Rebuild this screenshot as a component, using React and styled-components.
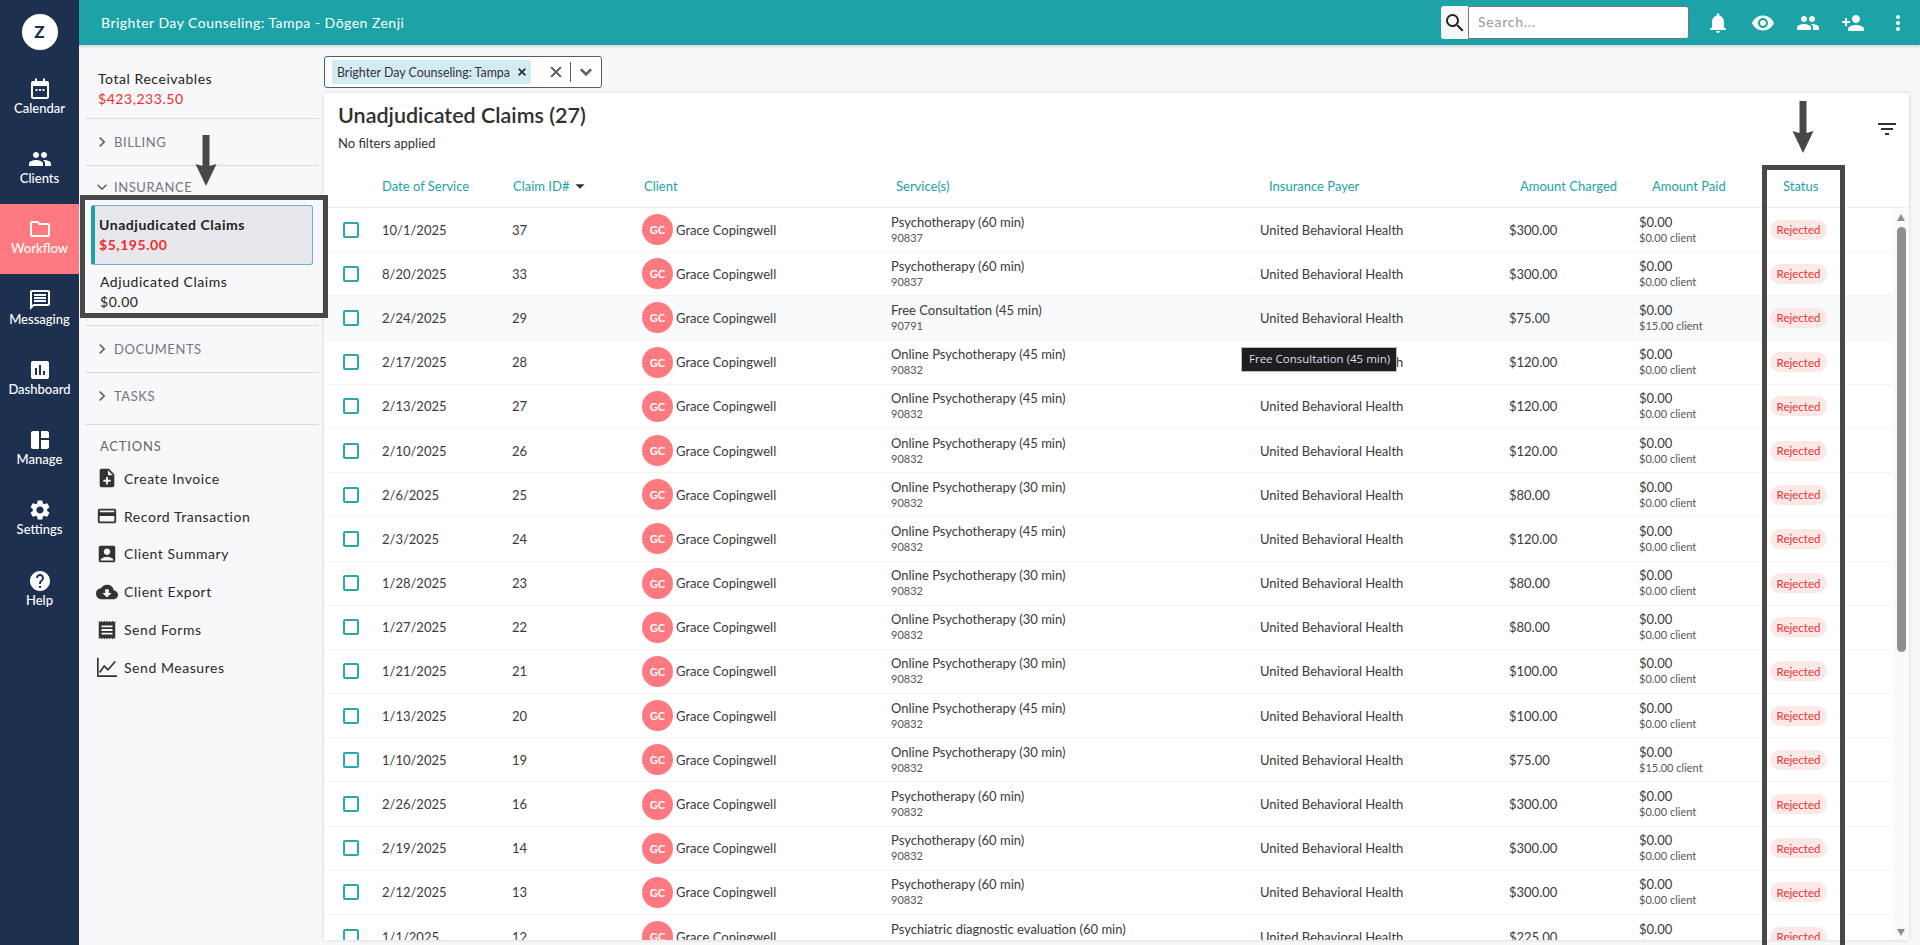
import React from "react";
import styled, { createGlobalStyle } from "styled-components";
import {
  MdPeople,
  MdOutlineFolder,
  MdOutlineMessage,
  MdAssessment,
  MdSpaceDashboard,
  MdSettings,
  MdHelp,
  MdNoteAdd,
  MdOutlineCreditCard,
  MdAccountBox,
  MdCloudDownload,
  MdReceipt,
  MdNotifications,
  MdVisibility,
  MdPersonAdd,
  MdMoreVert,
  MdFilterList,
  MdSearch,
  MdChevronRight,
  MdExpandMore,
  MdClose,
  MdArrowDropDown,
} from "react-icons/md";

const FONT = `Lato, "Noto Sans", Arial, sans-serif`;
const TEAL = "#1ca3a8";
const NAVY = "#1d3050";

const GlobalStyle = createGlobalStyle`
  html, body {
    margin: 0;
    padding: 0;
    height: 945px;
    overflow: hidden;
    background: #f8f8fa;
    font-family: ${FONT};
  }
  * { box-sizing: border-box; }
`;

const Page = styled.div`
  position: relative;
  display: flex;
  width: 1920px;
  height: 945px;
  overflow: hidden;
`;

/* left icon rail */
const Rail = styled.nav`
  width: 79px;
  flex: none;
  background: ${NAVY};
  display: flex;
  flex-direction: column;
`;

const LogoBox = styled.div`
  height: 63px;
  display: flex;
  align-items: center;
  justify-content: center;
`;

const Logo = styled.div`
  width: 36px;
  height: 36px;
  border-radius: 50%;
  background: #fff;
  color: ${NAVY};
  font-weight: 900;
  font-size: 17px;
  display: flex;
  align-items: center;
  justify-content: center;
`;

const RailItem = styled.div`
  height: 70.3px;
  display: flex;
  flex-direction: column;
  align-items: center;
  justify-content: center;
  padding-bottom: 4px;
  color: #fff;
  font-size: 13px;
  font-weight: 500;
  line-height: 15px;
  background: ${(p) => (p.$active ? "#ff7a80" : "transparent")};
  svg { display: block; }
`;

/* right of the rail */
const Main = styled.div`
  flex: 1;
  min-width: 0;
  display: flex;
  flex-direction: column;
`;

const TopBar = styled.header`
  height: 45px;
  flex: none;
  background: ${TEAL};
  box-shadow: 0 1px 4px rgba(0, 0, 0, 0.2);
  display: flex;
  align-items: center;
  padding: 0 0 0 22px;
  color: #fff;
  position: relative;
`;

const TopTitle = styled.div`
  flex: 1;
  font-size: 14px;
  letter-spacing: 0.48px;
`;

const SearchBtn = styled.div`
  width: 27px;
  height: 33px;
  background: #f8f8fa;
  border-radius: 3px 0 0 3px;
  color: #222;
  display: flex;
  align-items: center;
  justify-content: center;
`;

const SearchInput = styled.div`
  width: 221px;
  height: 33px;
  background: #fff;
  border: 1px solid #777;
  border-radius: 0 3px 3px 0;
  color: #9a9a9a;
  font-size: 14px;
  letter-spacing: 0.75px;
  padding-left: 9px;
  line-height: 30px;
`;

const TopIcons = styled.div`
  display: flex;
  align-items: center;
  margin-left: 6px;
`;

const TopIcon = styled.div`
  width: 45px;
  display: flex;
  justify-content: center;
`;

const Body = styled.div`
  flex: 1;
  min-height: 0;
  display: flex;
`;

/* secondary nav */
const SideNav = styled.aside`
  width: 245px;
  flex: none;
  padding: 0 5px 0 6px;
  color: #222;
`;

const NavSection = styled.section`
  height: ${(p) => p.$h}px;
  border-bottom: ${(p) => (p.$last ? "none" : "1px solid #dcdce0")};
`;

const Receivables = styled(NavSection)`
  padding: 24px 0 0 13px;
  font-size: 14px;
  line-height: 20px;
  letter-spacing: 0.55px;
`;

const Red = styled.div`
  color: #f02c2c;
  letter-spacing: 0.55px;
`;

const NavHead = styled.div`
  height: ${(p) => p.$h || 46}px;
  padding-top: ${(p) => p.$pt || 0}px;
  display: flex;
  align-items: center;
  gap: 2px;
  padding-left: 10px;
  color: #75757f;
  font-size: 13px;
  letter-spacing: 0.55px;
  svg { color: #666; margin-left: -3px; }
`;

const ClaimItem = styled.div`
  margin: 0 6px;
  height: 60px;
  padding: ${(p) => (p.$selected ? "9px 0 0 4px" : "7px 0 0 9px")};
  font-size: 14px;
  line-height: 20px;
  letter-spacing: 0.55px;
  font-weight: ${(p) => (p.$selected ? 700 : 400)};
  color: #222;
  ${(p) =>
    p.$selected &&
    `
    background: #e8e8ec;
    border: 1.5px solid #6bb0d5;
    border-left: 4px solid ${TEAL};
    border-radius: 3px;
  `}
`;

const ActionsLabel = styled.div`
  padding: 13px 0 0 15px;
  height: 34.5px;
  color: #666;
  font-size: 13px;
  letter-spacing: 0.8px;
`;

const ActionRow = styled.div`
  height: 37.8px;
  display: flex;
  align-items: center;
  gap: 6px;
  padding-left: 11px;
  color: #2a2a2a;
  font-size: 14px;
  letter-spacing: 0.55px;
  svg { flex: none; color: #333; }
`;

/* content area */
const Content = styled.main`
  flex: 1;
  min-width: 0;
  display: flex;
  flex-direction: column;
  padding: 11px 11px 5px 0;
`;

const Select = styled.div`
  width: 278px;
  height: 32px;
  flex: none;
  border: 1px solid #555c68;
  border-radius: 3px;
  background: #fff;
  display: flex;
  align-items: center;
  padding: 0 4px 0 7px;
  margin-bottom: 5px;
`;

const Chip = styled.div`
  width: 199px;
  height: 24px;
  background: #d3ebf3;
  display: flex;
  align-items: center;
  justify-content: space-between;
  padding: 0 3px 0 5px;
  font-size: 12.4px;
  color: #333;
  path:not([fill="none"]) { stroke: currentColor; stroke-width: 2; }
`;

const SelectTail = styled.div`
  flex: 1;
  display: flex;
  align-items: center;
  justify-content: flex-end;
  color: #5a6270;
  path:not([fill="none"]) { stroke: currentColor; stroke-width: 1; }
`;

const Sep = styled.span`
  width: 1px;
  height: 20px;
  background: #555c68;
  margin: 0 4px 0 5px;
`;

const Panel = styled.section`
  flex: 1;
  min-height: 0;
  background: #fff;
  box-shadow: 0 0 4px rgba(0, 0, 0, 0.16);
  display: flex;
  flex-direction: column;
`;

const PanelHead = styled.div`
  height: 72px;
  flex: none;
  padding: 8px 10px 0 14px;
  display: flex;
  justify-content: space-between;
  align-items: flex-start;
`;

const Title = styled.h1`
  margin: 0;
  font-size: 21.5px;
  line-height: 28px;
  font-weight: 600;
  color: #2f2f2f;
`;

const SubTitle = styled.div`
  font-size: 13px;
  line-height: 16px;
  margin-top: 6px;
  color: #333;
`;

const FilterBtn = styled.div`
  color: #333;
  margin-top: 16px;
  svg { display: block; }
`;

const HeadRow = styled.div`
  height: 43px;
  flex: none;
  display: grid;
  grid-template-columns: 131px 131px 252px 373px 251px 132px 131px 1fr;
  align-items: center;
  padding-left: 58px;
  border-bottom: 1px solid #efefef;
  color: ${TEAL};
  font-size: 13px;
`;

const SortCell = styled.div`
  display: flex;
  align-items: center;
  svg { color: #333; }
`;

const TableArea = styled.div`
  flex: 1;
  min-height: 0;
  display: flex;
`;

const Rows = styled.div`
  flex: 1;
  min-width: 0;
  overflow: hidden;
`;

const Row = styled.div`
  height: 44.2px;
  display: grid;
  grid-template-columns: 39px 130px 130px 249px 369px 249px 130px 131px 1fr;
  align-items: center;
  padding-left: 19px;
  border-bottom: 1px solid #f3f3f5;
  background: ${(p) => (p.$hover ? "#f8fafb" : "#fff")};
  color: #3a3a3a;
  font-size: 13px;
`;

const Check = styled.span`
  width: 16px;
  height: 16px;
  border: 2px solid #2aa9ad;
  border-radius: 2px;
  background: #fff;
`;

const ClientCell = styled.div`
  display: flex;
  align-items: center;
  gap: 3px;
`;

const Avatar = styled.span`
  width: 31px;
  height: 31px;
  border-radius: 50%;
  background: #ff7a80;
  color: #fff;
  font-size: 11px;
  font-weight: 700;
  display: flex;
  align-items: center;
  justify-content: center;
`;

const Stack = styled.div`
  line-height: 15px;
`;

const Small = styled.div`
  font-size: 11px;
  color: #555;
`;

const Badge = styled.span`
  justify-self: start;
  height: 20px;
  width: 57px;
  border-radius: 10px;
  background: #fde8e8;
  color: #ec2f2f;
  font-size: 11.5px;
  display: flex;
  align-items: center;
  justify-content: center;
`;

const ScrollBar = styled.div`
  width: 16px;
  flex: none;
  background: #fafafa;
  display: flex;
  flex-direction: column;
  align-items: center;
  padding: 6px 0 4px;
`;

const ArrowUp = styled.span`
  border: 4.5px solid transparent;
  border-top: none;
  border-bottom: 7px solid #8e8e8e;
`;

const ArrowDown = styled.span`
  border: 4.5px solid transparent;
  border-bottom: none;
  border-top: 7px solid #8e8e8e;
`;

const Thumb = styled.div`
  width: 9px;
  height: 425px;
  margin-top: 6px;
  margin-bottom: auto;
  border-radius: 5px;
  background: #8e8e8e;
`;

/* things laid over the page: the tooltip and the drawn-on annotations */
const Tooltip = styled.div`
  position: absolute;
  left: 1241px;
  top: 347px;
  width: 156px;
  height: 25px;
  background: #1e1e1e;
  border: 1px solid #bbb;
  color: #dde;
  font-family: "Open Sans", sans-serif;
  font-size: 11.5px;
  line-height: 22px;
  padding-left: 7px;
  white-space: nowrap;
`;

const Frame = styled.div`
  position: absolute;
  left: ${(p) => p.$x}px;
  top: ${(p) => p.$y}px;
  width: ${(p) => p.$w}px;
  height: ${(p) => p.$h}px;
  border: 5px solid #484848;
  pointer-events: none;
`;

const ArrowMark = styled.svg`
  position: absolute;
  left: ${(p) => p.$x}px;
  top: ${(p) => p.$y}px;
`;

const CalendarIcon = () => (
  <svg width="24" height="24" viewBox="0 0 24 24" fill="currentColor">
    <path d="M7 1.5h2V4h6V1.5h2V4h2a2 2 0 0 1 2 2v14a2 2 0 0 1-2 2H5a2 2 0 0 1-2-2V6a2 2 0 0 1 2-2h2V1.5zM5 9v11h14V9H5z" />
    <rect x="7.5" y="12" width="2" height="2" />
    <rect x="11" y="12" width="2" height="2" />
    <rect x="14.5" y="12" width="2" height="2" />
  </svg>
);

const MeasuresIcon = () => (
  <svg width="22" height="22" viewBox="0 0 24 24" fill="none" stroke="#333" strokeWidth="1.8">
    <path d="M2 2v20h21" />
    <path d="M4 18l5-7 4 4 8-9" />
  </svg>
);

const Arrow = ({ x, y, h }) => (
  <ArrowMark $x={x} $y={y} width="22" height={h} viewBox={`0 0 22 ${h}`}>
    <path
      d={`M7.5 0h7v${h - 20}l7-2L11 ${h}L0.5 ${h - 22}l7 2z`}
      fill="#484848"
    />
  </ArrowMark>
);

const railItems = [
  ["Calendar", <CalendarIcon key="i" />],
  ["Clients", <MdPeople key="i" size={24} />],
  ["Workflow", <MdOutlineFolder key="i" size={24} />, true],
  ["Messaging", <MdOutlineMessage key="i" size={24} />],
  ["Dashboard", <MdAssessment key="i" size={24} />],
  ["Manage", <MdSpaceDashboard key="i" size={24} />],
  ["Settings", <MdSettings key="i" size={24} />],
  ["Help", <MdHelp key="i" size={24} />],
];

const actions = [
  ["Create Invoice", <MdNoteAdd key="i" size={22} />],
  ["Record Transaction", <MdOutlineCreditCard key="i" size={22} />],
  ["Client Summary", <MdAccountBox key="i" size={22} />],
  ["Client Export", <MdCloudDownload key="i" size={22} />],
  ["Send Forms", <MdReceipt key="i" size={22} />],
  ["Send Measures", <MeasuresIcon key="i" />],
];

const P60 = "Psychotherapy (60 min)";
const O45 = "Online Psychotherapy (45 min)";
const O30 = "Online Psychotherapy (30 min)";

const claims = [
  ["10/1/2025", 37, P60, "90837", "$300.00", "$0.00"],
  ["8/20/2025", 33, P60, "90837", "$300.00", "$0.00"],
  ["2/24/2025", 29, "Free Consultation (45 min)", "90791", "$75.00", "$15.00"],
  ["2/17/2025", 28, O45, "90832", "$120.00", "$0.00"],
  ["2/13/2025", 27, O45, "90832", "$120.00", "$0.00"],
  ["2/10/2025", 26, O45, "90832", "$120.00", "$0.00"],
  ["2/6/2025", 25, O30, "90832", "$80.00", "$0.00"],
  ["2/3/2025", 24, O45, "90832", "$120.00", "$0.00"],
  ["1/28/2025", 23, O30, "90832", "$80.00", "$0.00"],
  ["1/27/2025", 22, O30, "90832", "$80.00", "$0.00"],
  ["1/21/2025", 21, O30, "90832", "$100.00", "$0.00"],
  ["1/13/2025", 20, O45, "90832", "$100.00", "$0.00"],
  ["1/10/2025", 19, O30, "90832", "$75.00", "$15.00"],
  ["2/26/2025", 16, P60, "90832", "$300.00", "$0.00"],
  ["2/19/2025", 14, P60, "90832", "$300.00", "$0.00"],
  ["2/12/2025", 13, P60, "90832", "$300.00", "$0.00"],
  ["1/1/2025", 12, "Psychiatric diagnostic evaluation (60 min)", "90791", "$225.00", "$0.00"],
];

export default function App() {
  return (
    <Page>
      <GlobalStyle />
      <Rail>
        <LogoBox>
          <Logo>Z</Logo>
        </LogoBox>
        {railItems.map(([label, icon, active]) => (
          <RailItem key={label} $active={active}>
            {icon}
            {label}
          </RailItem>
        ))}
      </Rail>

      <Main>
        <TopBar>
          <TopTitle>Brighter Day Counseling: Tampa - Dōgen Zenji</TopTitle>
          <SearchBtn>
            <MdSearch size={24} />
          </SearchBtn>
          <SearchInput>Search...</SearchInput>
          <TopIcons>
            <TopIcon><MdNotifications size={24} /></TopIcon>
            <TopIcon><MdVisibility size={24} /></TopIcon>
            <TopIcon><MdPeople size={24} /></TopIcon>
            <TopIcon><MdPersonAdd size={24} /></TopIcon>
            <TopIcon><MdMoreVert size={24} /></TopIcon>
          </TopIcons>
        </TopBar>

        <Body>
          <SideNav>
            <Receivables $h={74}>
              Total Receivables
              <Red>$423,233.50</Red>
            </Receivables>
            <NavSection $h={47}>
              <NavHead><MdChevronRight size={20} />BILLING</NavHead>
            </NavSection>
            <NavSection $h={160}>
              <NavHead $h={39} $pt={3}><MdExpandMore size={20} />INSURANCE</NavHead>
              <ClaimItem $selected>
                Unadjudicated Claims
                <Red>$5,195.00</Red>
              </ClaimItem>
              <ClaimItem>
                Adjudicated Claims
                <div>$0.00</div>
              </ClaimItem>
            </NavSection>
            <NavSection $h={47}>
              <NavHead><MdChevronRight size={20} />DOCUMENTS</NavHead>
            </NavSection>
            <NavSection $h={52}>
              <NavHead><MdChevronRight size={20} />TASKS</NavHead>
            </NavSection>
            <NavSection $h={300} $last>
              <ActionsLabel>ACTIONS</ActionsLabel>
              {actions.map(([label, icon]) => (
                <ActionRow key={label}>
                  {icon}
                  {label}
                </ActionRow>
              ))}
            </NavSection>
          </SideNav>

          <Content>
            <Select>
              <Chip>
                Brighter Day Counseling: Tampa
                <MdClose size={12} />
              </Chip>
              <SelectTail>
                <MdClose size={18} />
                <Sep />
                <MdExpandMore size={22} />
              </SelectTail>
            </Select>

            <Panel>
              <PanelHead>
                <div>
                  <Title>Unadjudicated Claims (27)</Title>
                  <SubTitle>No filters applied</SubTitle>
                </div>
                <FilterBtn><MdFilterList size={24} /></FilterBtn>
              </PanelHead>

              <HeadRow>
                <div>Date of Service</div>
                <SortCell>Claim ID#<MdArrowDropDown size={22} /></SortCell>
                <div>Client</div>
                <div>Service(s)</div>
                <div>Insurance Payer</div>
                <div>Amount Charged</div>
                <div>Amount Paid</div>
                <div>Status</div>
              </HeadRow>

              <TableArea>
                <Rows>
                  {claims.map((c, i) => (
                    <Row key={c[1]} $hover={i === 2}>
                      <Check />
                      <div>{c[0]}</div>
                      <div>{c[1]}</div>
                      <ClientCell>
                        <Avatar>GC</Avatar>
                        Grace Copingwell
                      </ClientCell>
                      <Stack>
                        {c[2]}
                        <Small>{c[3]}</Small>
                      </Stack>
                      <div>United Behavioral Health</div>
                      <div>{c[4]}</div>
                      <Stack>
                        $0.00
                        <Small>{c[5]} client</Small>
                      </Stack>
                      <Badge>Rejected</Badge>
                    </Row>
                  ))}
                </Rows>
                <ScrollBar>
                  <ArrowUp />
                  <Thumb />
                  <ArrowDown />
                </ScrollBar>
              </TableArea>
            </Panel>
          </Content>
        </Body>
      </Main>

      <Tooltip>Free Consultation (45 min)</Tooltip>
      <Frame $x={80} $y={195} $w={248} $h={123} />
      <Frame $x={1762} $y={165} $w={83} $h={785} />
      <Arrow x={195} y={135} h={51} />
      <Arrow x={1792} y={101} h={52} />
    </Page>
  );
}
